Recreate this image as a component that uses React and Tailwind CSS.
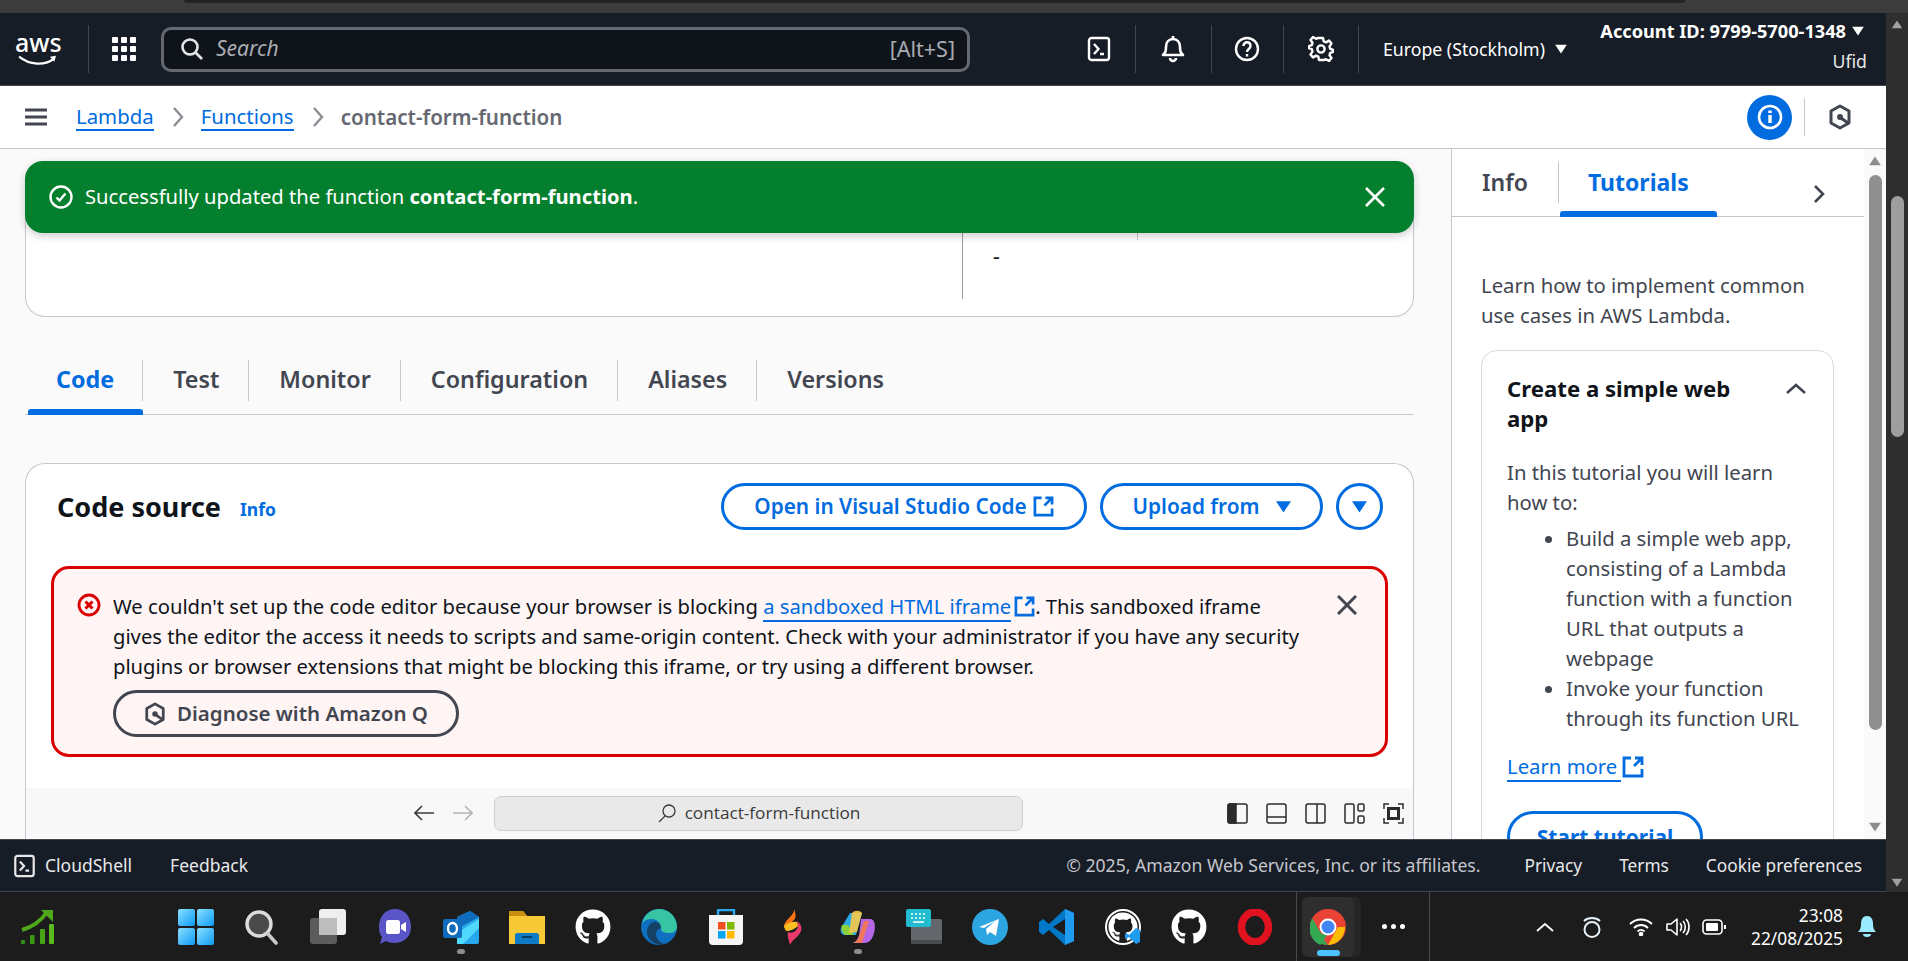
import { useId } from "react";
import { FaGithub } from "react-icons/fa";

const ExternalIcon = ({ className = "" }) => (
  <svg viewBox="0 0 22 22" fill="none" stroke="currentColor" strokeWidth="2.8" className={className}>
    <path d="M9 2H2v18h18v-7" />
    <path d="M13 2h7v7M20 2l-8 8" />
  </svg>
);

const Caret = ({ className = "" }) => (
  <svg viewBox="0 0 14 12" fill="currentColor" className={className}>
    <path d="M0 1h14L7 11.5z" />
  </svg>
);

const QIcon = ({ className = "" }) => (
  <svg viewBox="0 0 24 26" fill="none" stroke="currentColor" strokeWidth="3" className={className}>
    <path d="M12 2l9 5v12l-9 5-9-5V7z" strokeLinejoin="round" />
    <circle cx="12" cy="13" r="3" fill="currentColor" stroke="none" />
    <path d="M13 14l7 5" />
  </svg>
);

const TerminalIcon = ({ className = "" }) => (
  <svg viewBox="0 0 24 26" fill="none" stroke="currentColor" strokeWidth="2.4" className={className}>
    <rect x="2" y="2" width="20" height="22" rx="2.5" />
    <path d="M7 8l4.5 5L7 18M13 18h4" />
  </svg>
);

const NavDivider = () => <div className="h-[48px] w-px bg-[#424650]" />;

const TopNav = () => (
  <header className="flex h-[73px] items-center border-b border-[#424650] bg-[#161d26] text-white">
    <div className="relative ml-[15px] h-[40px] w-[46px] leading-none">
      <span className="block text-center text-[25px] leading-[26px] font-medium">aws</span>
      <svg viewBox="0 0 46 14" fill="none" className="absolute top-[26px] left-0 h-[12px] w-[46px]">
        <path d="M1 2c12 10 30 11 41 2" stroke="white" strokeWidth="2.6" />
        <path d="M37 2l7-1-2 7z" fill="white" />
      </svg>
    </div>
    <div className="ml-[27px] h-[48px] w-px bg-[#424650]" />
    <div className="ml-[23px] grid w-[24px] grid-cols-3 gap-[3px]">
      {[...Array(9)].map((_, i) => (
        <div key={i} className="h-[6px] w-[6px] rounded-[1px] bg-white" />
      ))}
    </div>
    <div className="ml-[25px] flex h-[45px] w-[809px] shrink-0 items-center rounded-[10px] border-[3px] border-[#656871] bg-[#0f141a] pr-[12px] pl-[16px] text-[#a9acb3]">
      <svg viewBox="0 0 24 24" fill="none" stroke="#e6e6e8" strokeWidth="2.6" className="h-[24px] w-[24px]">
        <circle cx="10" cy="10" r="7.5" />
        <path d="M15.5 15.5l6.5 6.5" />
      </svg>
      <span className="ml-[12px] text-[21px] italic">Search</span>
      <span className="ml-auto text-[21.5px]">[Alt+S]</span>
    </div>
    <TerminalIcon className="ml-[117px] h-[26px] w-[24px]" />
    <div className="ml-[24px]"><NavDivider /></div>
    <svg viewBox="0 0 24 28" fill="none" stroke="white" strokeWidth="2.6" className="ml-[25px] h-[28px] w-[24px]">
      <path d="M2 20c2-2 3-3 3-8 0-5 3-8 7-8s7 3 7 8c0 5 1 6 3 8z" strokeLinejoin="round" />
      <path d="M12 4V1M9 23a3 3 0 006 0" />
    </svg>
    <div className="ml-[26px]"><NavDivider /></div>
    <svg viewBox="0 0 26 26" fill="none" stroke="white" strokeWidth="2.4" className="ml-[22px] h-[26px] w-[26px]">
      <circle cx="13" cy="13" r="11" />
      <path d="M9.5 10c0-5 7-5 7 0 0 3-3.5 3-3.5 6M13 18v2.5" />
    </svg>
    <div className="ml-[23px]"><NavDivider /></div>
    <svg viewBox="0 0 26 26" fill="none" stroke="white" strokeWidth="2.4" className="ml-[24px] h-[26px] w-[26px]">
      <path d="M11 2h4l.7 3.4 2.3 1 3-1.8 2.5 3-2 2.8.7 2.4 3 1v2l-3 1-.7 2.4 2 2.8-2.5 3-3-1.8-2.3 1L15 24h-4l-.7-3.4-2.3-1-3 1.8-2.5-3 2-2.8-.7-2.4-3-1v-2l3-1 .7-2.4-2-2.8 2.5-3 3 1.8 2.3-1z" strokeLinejoin="round" />
      <circle cx="13" cy="13" r="3.6" />
    </svg>
    <div className="ml-[24px]"><NavDivider /></div>
    <div className="ml-[24px] flex items-center gap-[10px] text-[17.7px] whitespace-nowrap">
      Europe (Stockholm)
      <Caret className="h-[10px] w-[12px]" />
    </div>
    <div className="mr-[22px] mb-[6px] ml-auto flex flex-col items-end text-[18.2px] leading-[30px]">
      <div className="flex items-center gap-[6px] font-bold whitespace-nowrap">
        Account ID: 9799-5700-1348
        <Caret className="h-[10px] w-[12px]" />
      </div>
      <div className="mr-[-3px] text-[17.7px] text-[#e8e8ea]">Ufid</div>
    </div>
  </header>
);

const Breadcrumbs = () => (
  <div className="flex h-[63px] items-center border-b border-[#c6c6cd] bg-white">
    <svg viewBox="0 0 22 18" fill="none" stroke="#424650" strokeWidth="3" className="ml-[25px] h-[18px] w-[22px]">
      <path d="M0 2h22M0 9h22M0 16h22" />
    </svg>
    <a className="ml-[29px] border-b-2 border-[#006ce0] text-[20.4px] leading-[26px] text-[#006ce0]">Lambda</a>
    <svg viewBox="0 0 12 22" fill="none" stroke="#8c8c94" strokeWidth="2.4" className="ml-[18px] h-[22px] w-[12px]">
      <path d="M2 2l8 9-8 9" />
    </svg>
    <a className="ml-[17px] border-b-2 border-[#006ce0] text-[20.4px] leading-[26px] text-[#006ce0]">Functions</a>
    <svg viewBox="0 0 12 22" fill="none" stroke="#8c8c94" strokeWidth="2.4" className="ml-[18px] h-[22px] w-[12px]">
      <path d="M2 2l8 9-8 9" />
    </svg>
    <span className="ml-[17px] text-[20.6px] font-semibold text-[#656871]">contact-form-function</span>
    <div className="ml-auto flex h-[45px] w-[45px] items-center justify-center rounded-full bg-[#006ce0]">
      <svg viewBox="0 0 26 26" fill="none" stroke="white" strokeWidth="2.6" className="h-[26px] w-[26px]">
        <circle cx="13" cy="13" r="11" />
        <path d="M13 11v8" strokeWidth="3.4" />
        <path d="M13 6.5v2.6" strokeWidth="3.4" />
      </svg>
    </div>
    <div className="ml-[12px] h-[38px] w-px bg-[#c6c6cd]" />
    <QIcon className="mr-[34px] ml-[23px] h-[26px] w-[24px] text-[#424650]" />
  </div>
);

const tabs = ["Code", "Test", "Monitor", "Configuration", "Aliases", "Versions"];

const MainTabs = () => (
  <div className="mt-[38px] flex h-[60px] items-stretch border-b border-[#c6c6cd] pb-[11px] text-[#424650]">
    {tabs.map((tab, i) => (
      <div key={tab} className={i === 0 ? "relative ml-[3px] flex items-center pr-[29px] pl-[28px]" : "relative flex items-center px-[30px]"}>
        <span className={i === 0 ? "text-[23.3px] font-bold text-[#006ce0]" : "text-[23.3px] font-semibold"}>{tab}</span>
        {i === 0 && <div className="absolute right-0 -bottom-[12px] left-0 h-[6px] rounded-t-[3px] bg-[#006ce0]" />}
        {i < tabs.length - 1 && <div className="absolute top-[5px] right-0 h-[41px] w-px bg-[#c6c6cd]" />}
      </div>
    ))}
  </div>
);

const PillButton = ({ children, className = "" }) => (
  <button className={`flex h-[47px] items-center justify-center rounded-full border-[3px] border-[#006ce0] text-[20.8px] font-semibold whitespace-nowrap text-[#006ce0] ${className}`}>
    {children}
  </button>
);

const ErrorAlert = () => (
  <div className="relative mx-[25px] mt-[36px] h-[191px] rounded-[18px] border-[3px] border-[#db0000] bg-[#fff5f5] pt-[22px] pl-[59px] text-[#0f141a]">
    <svg viewBox="0 0 24 24" fill="none" stroke="#db0000" strokeWidth="2.8" className="absolute top-[24px] left-[23px] h-[24px] w-[24px]">
      <circle cx="12" cy="12" r="10" />
      <path d="M8.5 8.5l7 7M15.5 8.5l-7 7" strokeWidth="3" />
    </svg>
    <p className="text-[20.2px] leading-[30px] whitespace-nowrap">
      We couldn't set up the code editor because your browser is blocking{" "}
      <a className="border-b-2 border-[#006ce0] text-[#006ce0]">a sandboxed HTML iframe</a>
      <ExternalIcon className="ml-[3px] inline h-[21px] w-[21px] align-[-3px] text-[#006ce0]" />. This sandboxed iframe
      <br />
      gives the editor the access it needs to scripts and same-origin content. Check with your administrator if you have any security
      <br />
      plugins or browser extensions that might be blocking this iframe, or try using a different browser.
    </p>
    <svg viewBox="0 0 20 20" fill="none" stroke="#424650" strokeWidth="3" className="absolute top-[26px] right-[28px] h-[20px] w-[20px]">
      <path d="M1 1l18 18M19 1L1 19" />
    </svg>
    <button className="mt-[9px] flex h-[47px] w-[346px] items-center justify-center gap-[11px] rounded-full border-[3px] border-[#424650] text-[20.5px] font-semibold text-[#424650]">
      <QIcon className="h-[24px] w-[22px]" />
      Diagnose with Amazon Q
    </button>
  </div>
);

const EditorToolbar = () => (
  <div className="mt-[31px] flex h-[50px] items-center bg-[#f8f8f8] pl-[388px] text-[#333]">
    <svg viewBox="0 0 20 16" fill="none" stroke="#3b3b3b" strokeWidth="1.6" className="h-[16px] w-[20px]">
      <path d="M20 8H1M8 1L1 8l7 7" />
    </svg>
    <svg viewBox="0 0 20 16" fill="none" stroke="#b4b4b4" strokeWidth="1.6" className="ml-[19px] h-[16px] w-[20px]">
      <path d="M0 8h19M12 1l7 7-7 7" />
    </svg>
    <div className="ml-[21px] flex h-[35px] w-[529px] shrink-0 items-center justify-center gap-[8px] rounded-[7px] border border-[#cfcfcf] bg-[#e9e9e9] font-['Open_Sans',sans-serif] text-[17.2px] text-[#3b3b3b]">
      <svg viewBox="0 0 20 20" fill="none" stroke="#3b3b3b" strokeWidth="1.3" className="h-[20px] w-[20px]">
        <circle cx="12" cy="8" r="6" />
        <path d="M8 13l-6 6" />
      </svg>
      contact-form-function
    </div>
    <div className="ml-[204px] flex items-center gap-[18px]">
      <svg viewBox="0 0 21 21" fill="none" stroke="#2b2b2b" strokeWidth="1.5" className="h-[21px] w-[21px]">
        <rect x="1" y="1" width="19" height="19" rx="2" />
        <path d="M1 3a2 2 0 012-2h6v19H3a2 2 0 01-2-2z" fill="#2b2b2b" />
      </svg>
      <svg viewBox="0 0 21 21" fill="none" stroke="#2b2b2b" strokeWidth="1.5" className="h-[21px] w-[21px]">
        <rect x="1" y="1" width="19" height="19" rx="2" />
        <path d="M1 14h19" />
      </svg>
      <svg viewBox="0 0 21 21" fill="none" stroke="#2b2b2b" strokeWidth="1.5" className="h-[21px] w-[21px]">
        <rect x="1" y="1" width="19" height="19" rx="2" />
        <path d="M12 1v19" />
      </svg>
      <svg viewBox="0 0 21 21" fill="none" stroke="#2b2b2b" strokeWidth="1.5" className="h-[21px] w-[21px]">
        <rect x="1" y="1" width="9" height="19" rx="1.5" />
        <rect x="14" y="1" width="6" height="7" rx="1.5" />
        <rect x="14" y="13" width="6" height="7" rx="1.5" />
      </svg>
      <svg viewBox="0 0 21 21" fill="none" stroke="#2b2b2b" strokeWidth="1.5" className="h-[21px] w-[21px]">
        <path d="M6 1H1v5M15 1h5v5M6 20H1v-5M15 20h5v-5" />
        <rect x="5.5" y="5.5" width="10" height="10" strokeWidth="3" />
      </svg>
    </div>
  </div>
);

const MainColumn = () => (
  <main className="relative w-[1451px] shrink-0 overflow-hidden bg-[#fafafa] pr-[37px] pl-[25px]">
    <div className="absolute top-[12px] right-[37px] left-[25px] z-10 flex h-[72px] items-center rounded-[18px] bg-[#037f2d] pr-[29px] pl-[24px] text-[20.2px] text-white shadow-[0_3px_8px_rgba(0,0,0,0.2)]">
      <svg viewBox="0 0 24 24" fill="none" stroke="white" strokeWidth="2.4" className="h-[24px] w-[24px]">
        <circle cx="12" cy="12" r="10.5" />
        <path d="M7.5 12.5l3 3 6-7" />
      </svg>
      <span className="mb-[2px] ml-[12px]">
        Successfully updated the function <span className="font-bold">contact-form-function</span>.
      </span>
      <svg viewBox="0 0 20 20" fill="none" stroke="white" strokeWidth="2.6" className="ml-auto h-[20px] w-[20px]">
        <path d="M1 1l18 18M19 1L1 19" />
      </svg>
    </div>

    <div className="relative mt-[50px] h-[118px] rounded-b-[20px] border-x border-b border-[#c6c6cd] bg-white">
      <div className="absolute top-0 left-[936px] h-[100px] w-px bg-[#9a9aa2]" />
      <div className="absolute top-0 left-[1111px] h-[41px] w-px bg-[#c6c6cd]" />
      <div className="absolute top-[42px] left-[967px] text-[21px] leading-[30px] text-[#0f141a]">-</div>
    </div>

    <MainTabs />

    <section className="mt-[48px] h-[400px] rounded-t-[20px] border-x border-t border-[#c6c6cd] bg-white">
      <div className="flex items-center pt-[19px] pr-[30px] pl-[31px]">
        <h2 className="text-[27px] leading-[47px] font-bold text-[#0f141a]">Code source</h2>
        <a className="mt-[6px] ml-[19px] text-[17.5px] font-bold text-[#006ce0]">Info</a>
        <div className="ml-auto flex items-center gap-[13px]">
          <PillButton className="w-[366px] gap-[6px]">
            Open in Visual Studio Code
            <ExternalIcon className="h-[21px] w-[21px]" />
          </PillButton>
          <PillButton className="w-[223px] gap-[16px]">
            Upload from
            <Caret className="h-[13px] w-[15px]" />
          </PillButton>
          <PillButton className="w-[47px]">
            <Caret className="h-[13px] w-[15px]" />
          </PillButton>
        </div>
      </div>
      <ErrorAlert />
      <EditorToolbar />
    </section>
  </main>
);

const SidePanel = () => (
  <aside className="flex w-[435px] shrink-0 bg-[#fafafa]">
    <div className="w-[413px] overflow-hidden border-l border-[#c6c6cd] bg-white">
      <div className="relative flex h-[68px] items-start border-b border-[#c6c6cd] pt-[13px]">
        <span className="mt-[4px] ml-[30px] text-[23px] leading-[32px] font-semibold text-[#424650]">Info</span>
        <div className="ml-[30px] h-[41px] w-px bg-[#c6c6cd]" />
        <span className="mt-[4px] ml-[29px] text-[23px] leading-[32px] font-bold text-[#006ce0]">Tutorials</span>
        <div className="absolute -bottom-px left-[108px] h-[6px] w-[157px] rounded-t-[3px] bg-[#006ce0]" />
        <svg viewBox="0 0 12 20" fill="none" stroke="#424650" strokeWidth="2.6" className="absolute top-[35px] left-[361px] h-[20px] w-[12px]">
          <path d="M2 2l8 8-8 8" />
        </svg>
      </div>
      <p className="mt-[53px] ml-[29px] text-[20.3px] leading-[30px] text-[#424650]">
        Learn how to implement common
        <br />
        use cases in AWS Lambda.
      </p>
      <div className="mt-[20px] ml-[29px] h-[600px] w-[353px] rounded-[16px] border border-[#d9d9de] pt-[23px] pr-[24px] pl-[25px] text-[20.3px] leading-[30px] text-[#424650]">
        <div className="flex justify-between">
          <h3 className="text-[22.2px] font-bold text-[#0f141a]">
            Create a simple web
            <br />
            app
          </h3>
          <svg viewBox="0 0 20 12" fill="none" stroke="#424650" strokeWidth="2.6" className="mt-[9px] mr-[3px] h-[12px] w-[20px]">
            <path d="M1 10l9-8 9 8" />
          </svg>
        </div>
        <p className="mt-[23px]">
          In this tutorial you will learn
          <br />
          how to:
        </p>
        <ul className="mt-[6px] ml-[59px] list-disc whitespace-nowrap">
          <li>
            Build a simple web app,
            <br />
            consisting of a Lambda
            <br />
            function with a function
            <br />
            URL that outputs a
            <br />
            webpage
          </li>
          <li>
            Invoke your function
            <br />
            through its function URL
          </li>
        </ul>
        <div className="mt-[19px] flex items-center">
          <a className="border-b-2 border-[#006ce0] pr-[4px] leading-[28px] text-[#006ce0]">Learn more</a>
          <ExternalIcon className="ml-[1px] h-[22px] w-[22px] text-[#006ce0]" />
        </div>
        <button className="mt-[29px] h-[52px] w-[196px] rounded-full border-[3px] border-[#006ce0] text-[21px] font-bold text-[#006ce0]">
          Start tutorial
        </button>
      </div>
    </div>
    <div className="flex w-[22px] flex-col items-center bg-[#fafafa] pt-[7px]">
      <Caret className="h-[10px] w-[14px] rotate-180 text-[#8c8c8c]" />
      <div className="mt-[9px] h-[555px] w-[13px] rounded-full bg-[#8f8f8f]" />
      <Caret className="mt-[92px] h-[10px] w-[14px] text-[#8c8c8c]" />
    </div>
  </aside>
);

const Footer = () => (
  <footer className="flex h-[53px] items-center border-y border-[#424650] bg-[#161d26] pr-[24px] pl-[13px] text-[17.3px] text-[#e8e8ea]">
    <TerminalIcon className="h-[24px] w-[23px]" />
    <span className="ml-[9px] text-[17.5px]">CloudShell</span>
    <span className="ml-[38px] text-[17.5px]">Feedback</span>
    <span className="ml-auto text-[17.6px] text-[#c6c6cd]">© 2025, Amazon Web Services, Inc. or its affiliates.</span>
    <span className="ml-[44px]">Privacy</span>
    <span className="ml-[37px]">Terms</span>
    <span className="ml-[37px]">Cookie preferences</span>
  </footer>
);

const OuterScrollbar = () => (
  <div className="flex w-[22px] shrink-0 flex-col items-center bg-[#2e2e2e] pt-[7px]">
    <Caret className="h-[9px] w-[14px] rotate-180 text-[#a0a0a0]" />
    <div className="mt-[167px] h-[241px] w-[13px] rounded-full bg-[#9e9e9e]" />
    <Caret className="mt-[441px] h-[9px] w-[14px] text-[#a0a0a0]" />
  </div>
);

const Gradient = ({ id, from, to }) => (
  <defs>
    <linearGradient id={id} x1="0" y1="0" x2="1" y2="1">
      <stop offset="0" stopColor={from} />
      <stop offset="1" stopColor={to} />
    </linearGradient>
  </defs>
);

const WindowsLogo = () => {
  const id = useId();
  return (
    <svg viewBox="0 0 36 36" className="h-[36px] w-[36px]">
      <Gradient id={id} from="#8be0ff" to="#0d9bf5" />
      <rect x="0" y="0" width="17" height="17" fill={`url(#${id})`} rx="2" />
      <rect x="19" y="0" width="17" height="17" fill={`url(#${id})`} rx="2" />
      <rect x="0" y="19" width="17" height="17" fill={`url(#${id})`} rx="2" />
      <rect x="19" y="19" width="17" height="17" fill={`url(#${id})`} rx="2" />
    </svg>
  );
};

const TaskbarIcons = [
  <WindowsLogo key="start" />,
  <svg key="search" viewBox="0 0 36 36" fill="none" className="h-[36px] w-[36px]">
    <circle cx="15" cy="15" r="12" fill="#4a4a4a" stroke="#dcdcdc" strokeWidth="3.4" />
    <path d="M24 25l8 9" stroke="#c8c8c8" strokeWidth="3.6" strokeLinecap="round" />
  </svg>,
  <svg key="views" viewBox="0 0 36 36" className="h-[36px] w-[36px]">
    <rect x="0" y="9" width="27" height="26" rx="3" fill="#5c5c5c" />
    <rect x="9" y="0" width="27" height="26" rx="3" fill="#efefef" />
    <rect x="9" y="9" width="18" height="17" fill="#bdbdbd" />
  </svg>,
  <svg key="meet" viewBox="0 0 36 36" className="h-[36px] w-[36px]">
    <path d="M18 0c10 0 16 8 16 18s-7 16-17 16c-3 0-6-1-8-2l-6 3 2-7C3 26 2 22 2 18 2 8 8 0 18 0z" fill="#5a55c7" />
    <rect x="9" y="11" width="14" height="14" rx="2.5" fill="white" />
    <path d="M24 16l5-3v10l-5-3z" fill="white" />
  </svg>,
  <svg key="outlook" viewBox="0 0 36 36" className="h-[36px] w-[36px]">
    <path d="M14 8l13-6 9 6v25a2 2 0 01-2 2H14z" fill="#28a8ea" />
    <path d="M14 8l13-6 9 6-22 12z" fill="#0f6cbd" />
    <path d="M14 24l22-14v9L20 35h-6z" fill="#50d9ff" />
    <rect x="0" y="10" width="19" height="19" rx="2" fill="#0f6cbd" />
    <ellipse cx="9.5" cy="19.5" rx="4.5" ry="5.5" fill="none" stroke="white" strokeWidth="2.4" />
  </svg>,
  <svg key="folder" viewBox="0 0 36 36" className="h-[36px] w-[36px]">
    <path d="M0 2h14l4 5H36v28H0z" fill="#f6c935" />
    <path d="M0 2h14l4 5H0z" fill="#c98f10" />
    <path d="M6 26a2 2 0 012-2h20a2 2 0 012 2v9H6z" fill="#0f7bc4" />
    <rect x="13" y="27" width="10" height="2" fill="#063e66" />
  </svg>,
  <FaGithub key="gh1" className="h-[36px] w-[36px] text-white" />,
  <svg key="edge" viewBox="0 0 36 36" className="h-[36px] w-[36px]">
    <circle cx="18" cy="18" r="18" fill="#0f6fc0" />
    <path d="M1 15C3 5 11 0 18 0c10 0 18 8 18 18 0 4-3 6-8 6-6 0-8-2-8-5 0-5-4-9-9-9-4 0-8 1-10 5z" fill="#36c4a3" />
    <path d="M20 19c0-4-3-6-6-6-5 0-8 5-8 10 0 7 7 13 15 13 2 0 4 0 6-1-7 1-12-5-12-10 0-3 2-5 5-6z" fill="#1c1c1c" opacity="0.55" />
  </svg>,
  <svg key="store" viewBox="0 0 36 36" className="h-[36px] w-[36px]">
    <path d="M10 7V1h16v6" fill="none" stroke="#29a8f0" strokeWidth="2.4" />
    <path d="M1 6h34v26a4 4 0 01-4 4H5a4 4 0 01-4-4z" fill="#f5f5f5" />
    <rect x="10" y="13" width="7.5" height="7.5" fill="#f25022" />
    <rect x="19" y="13" width="7.5" height="7.5" fill="#7fba00" />
    <rect x="10" y="22" width="7.5" height="7.5" fill="#00a4ef" />
    <rect x="19" y="22" width="7.5" height="7.5" fill="#ffb900" />
  </svg>,
  <svg key="spark" viewBox="0 0 36 36" className="h-[36px] w-[36px]">
    <path d="M20 0c1 6-9 10-10 17 0 3 2 5 6 4l5-2c-1-1-3-2-5 0-3 2-2-3 4-8 2-2 2-6 0-11z" fill="#f97316" />
    <path d="M23 12c4 3 6 7 3 12-3 5-8 7-10 12-1-5-3-9-2-13 3 2 7 0 9-3 1-2 1-5 0-8z" fill="#e93b6b" />
    <path d="M10 17c3-3 9-5 13-4l1 4c-3 3-8 5-12 5z" fill="#fbbf24" />
  </svg>,
  <svg key="copilot" viewBox="0 0 36 36" className="h-[36px] w-[36px]">
    <path d="M10 4h12l-6 22H5C1 26 0 22 1 19z" fill="#2ea8e5" />
    <path d="M5 26c-4-4-4-8-3-10l6 0 6 10z" fill="#8cd03a" />
    <path d="M12 4c2-3 8-3 10 0l-5 19-8 1z" fill="#f7c948" opacity="0.9" />
    <path d="M21 10h9c5 0 6 8 4 14-2 8-6 10-10 10H13c3-1 5-4 6-7z" fill="#b667e6" />
    <path d="M19 27l5-15h5l-7 22h-9c3-1 5-4 6-7z" fill="#f0785a" />
  </svg>,
  <svg key="keyboard" viewBox="0 0 36 36" className="h-[36px] w-[36px]">
    <rect x="5" y="10" width="31" height="25" rx="2" fill="#63666a" />
    <rect x="5" y="31" width="31" height="4" rx="1" fill="#4a4c50" />
    <rect x="0" y="0" width="25" height="18" rx="2" fill="#22bcd0" />
    <path d="M5 5h2M9 5h2M13 5h2M17 5h2M5 9h2M9 9h2M13 9h2M17 9h2M7 13h11" stroke="white" strokeWidth="1.6" />
  </svg>,
  <svg key="telegram" viewBox="0 0 36 36" className="h-[36px] w-[36px]">
    <circle cx="18" cy="18" r="18" fill="#2ca5e0" />
    <path d="M7 18l20-8-3 17-6-4-3 3-1-6 9-8-11 7z" fill="white" />
  </svg>,
  <svg key="vscode" viewBox="0 0 36 36" className="h-[36px] w-[36px]">
    <path d="M26 0l9 4v28l-9 4-16-15-6 5-4-3v-10l4-3 6 5z" fill="#0078c8" />
    <path d="M26 0l9 4v28l-9 4z" fill="#1f9cf0" />
    <path d="M26 10L14 18l12 8z" fill="#1c1c1c" />
  </svg>,
  <div key="ghd" className="relative flex h-[36px] w-[36px] items-center justify-center rounded-full border-2 border-white">
    <FaGithub className="h-[30px] w-[30px] text-white" />
    <svg viewBox="0 0 16 16" className="absolute -right-[2px] -bottom-[1px] h-[16px] w-[16px]">
      <path d="M11 0l4 2v12l-4 2-7-7-3 2-1-1V6l1-1 3 2z" fill="#1f9cf0" />
    </svg>
  </div>,
  <FaGithub key="gh2" className="h-[36px] w-[36px] text-white" />,
  <svg key="opera" viewBox="0 0 36 36" fill="none" className="h-[36px] w-[36px]">
    <ellipse cx="18" cy="18" rx="13.5" ry="15" stroke="#e0121f" strokeWidth="7.5" />
  </svg>,
];

const ChromeLogo = () => (
  <svg viewBox="0 0 36 36" className="h-[36px] w-[36px]">
    <circle cx="18" cy="18" r="18" fill="#ea4335" />
    <path d="M2 10l10 18 6 8A18 18 0 012 10z" fill="#34a853" />
    <path d="M18 36L28 18h7a18 18 0 01-17 18z" fill="#fbbc04" />
    <path d="M2.4 9.5l9 15.5 7-1-8 12A18 18 0 012.4 9.5z" fill="#34a853" />
    <circle cx="18" cy="18" r="8.5" fill="white" />
    <circle cx="18" cy="18" r="6.5" fill="#4285f4" />
  </svg>
);

const Taskbar = () => (
  <div className="flex h-[69px] items-center bg-[#1c1c1c] text-white">
    <svg viewBox="0 0 36 36" fill="none" className="ml-[19px] h-[36px] w-[36px]">
      <path d="M3 21c10-3 19-9 25-18" stroke="#4ea81a" strokeWidth="4" />
      <path d="M22 1h12v12z" fill="#4ea81a" />
      <rect x="2" y="31" width="4" height="4" rx="1" fill="#2f8f12" />
      <rect x="11" y="26" width="4.5" height="9" rx="1" fill="#3a9a14" />
      <rect x="21" y="20" width="5" height="15" rx="1" fill="#48a518" />
      <rect x="30" y="15" width="5" height="20" rx="1" fill="#59b81c" />
    </svg>
    <div className="ml-[108px] flex items-center">
      {TaskbarIcons.map((icon, i) => (
        <div key={i} className="relative flex h-[69px] w-[66.2px] items-center justify-center">
          {icon}
          {(i === 4 || i === 10) && <div className="absolute bottom-[7px] h-[5px] w-[8px] rounded-full bg-[#8c8c8c]" />}
        </div>
      ))}
    </div>
    <div className="ml-[8px] h-[69px] w-px bg-[#4a4a4a]" />
    <div className="relative ml-[5px] flex h-[60px] w-[52px] items-center justify-center rounded-[6px] bg-[#2e2e2e] shadow-[7px_0_0_#262626]">
      <ChromeLogo />
      <div className="absolute bottom-[1px] h-[6px] w-[23px] rounded-full bg-[#4cc2ff]" />
    </div>
    <div className="ml-[28px] flex gap-[4px]">
      <div className="h-[5px] w-[5px] rounded-full bg-white" />
      <div className="h-[5px] w-[5px] rounded-full bg-white" />
      <div className="h-[5px] w-[5px] rounded-full bg-white" />
    </div>
    <div className="ml-[24px] h-[69px] w-px bg-[#4a4a4a]" />
    <svg viewBox="0 0 18 10" fill="none" stroke="white" strokeWidth="1.8" className="ml-[106px] h-[10px] w-[18px]">
      <path d="M1 9l8-7 8 7" />
    </svg>
    <svg viewBox="0 0 20 24" fill="none" stroke="#e8f0fa" strokeWidth="2" className="ml-[28px] h-[24px] w-[20px]">
      <circle cx="10" cy="14.5" r="7.5" />
      <path d="M2 6c4-4 12-4 16 0" />
    </svg>
    <svg viewBox="0 0 24 18" fill="none" stroke="white" strokeWidth="1.8" className="ml-[27px] h-[18px] w-[24px]">
      <path d="M1 6c6-6 16-6 22 0M5 10c4-4 10-4 14 0M8.5 13.5c2-2 5-2 7 0" />
      <circle cx="12" cy="16" r="1.4" fill="white" />
    </svg>
    <svg viewBox="0 0 24 20" fill="none" stroke="white" strokeWidth="1.6" className="ml-[13px] h-[20px] w-[24px]">
      <path d="M1 7h4l6-5v16l-6-5H1z" strokeLinejoin="round" />
      <path d="M14 6c2 2 2 6 0 8M17 4c3 3 3 9 0 12M20 2c4 4 4 12 0 16" />
    </svg>
    <svg viewBox="0 0 24 16" fill="none" stroke="white" strokeWidth="1.6" className="ml-[12px] h-[16px] w-[24px]">
      <rect x="1" y="1" width="19" height="14" rx="3.5" />
      <rect x="4" y="4" width="12" height="8" rx="1" fill="white" stroke="none" />
      <path d="M23 6v4" strokeWidth="2.2" />
    </svg>
    <div className="mr-[65px] ml-auto text-right text-[17.3px] leading-[23px]">
      <div>23:08</div>
      <div>22/08/2025</div>
    </div>
  </div>
);

export default function App() {
  return (
    <div className="relative flex h-[961px] w-[1908px] flex-col overflow-hidden bg-[#3c3c3c] font-['Noto_Sans',sans-serif]">
      <div className="h-[13px] shrink-0 bg-[#3c3c3c]">
        <div className="ml-[184px] h-[3px] w-[1501px] rounded-b-[3px] bg-[#232323]" />
      </div>
      <div className="flex h-[879px] shrink-0">
        <div className="flex w-[1886px] flex-col">
          <TopNav />
          <Breadcrumbs />
          <div className="flex h-[690px] overflow-hidden">
            <MainColumn />
            <SidePanel />
          </div>
          <Footer />
        </div>
        <OuterScrollbar />
      </div>
      <Taskbar />
      <svg viewBox="0 0 20 24" fill="#9beaff" className="absolute top-[914px] left-[1857px] h-[24px] w-[20px]">
        <path d="M1 18c2-2 3-4 3-8 0-5 2-8 6-8s6 3 6 8c0 4 1 6 3 8z" />
        <path d="M6 20h8a4 3 0 01-8 0z" />
      </svg>
    </div>
  );
}
